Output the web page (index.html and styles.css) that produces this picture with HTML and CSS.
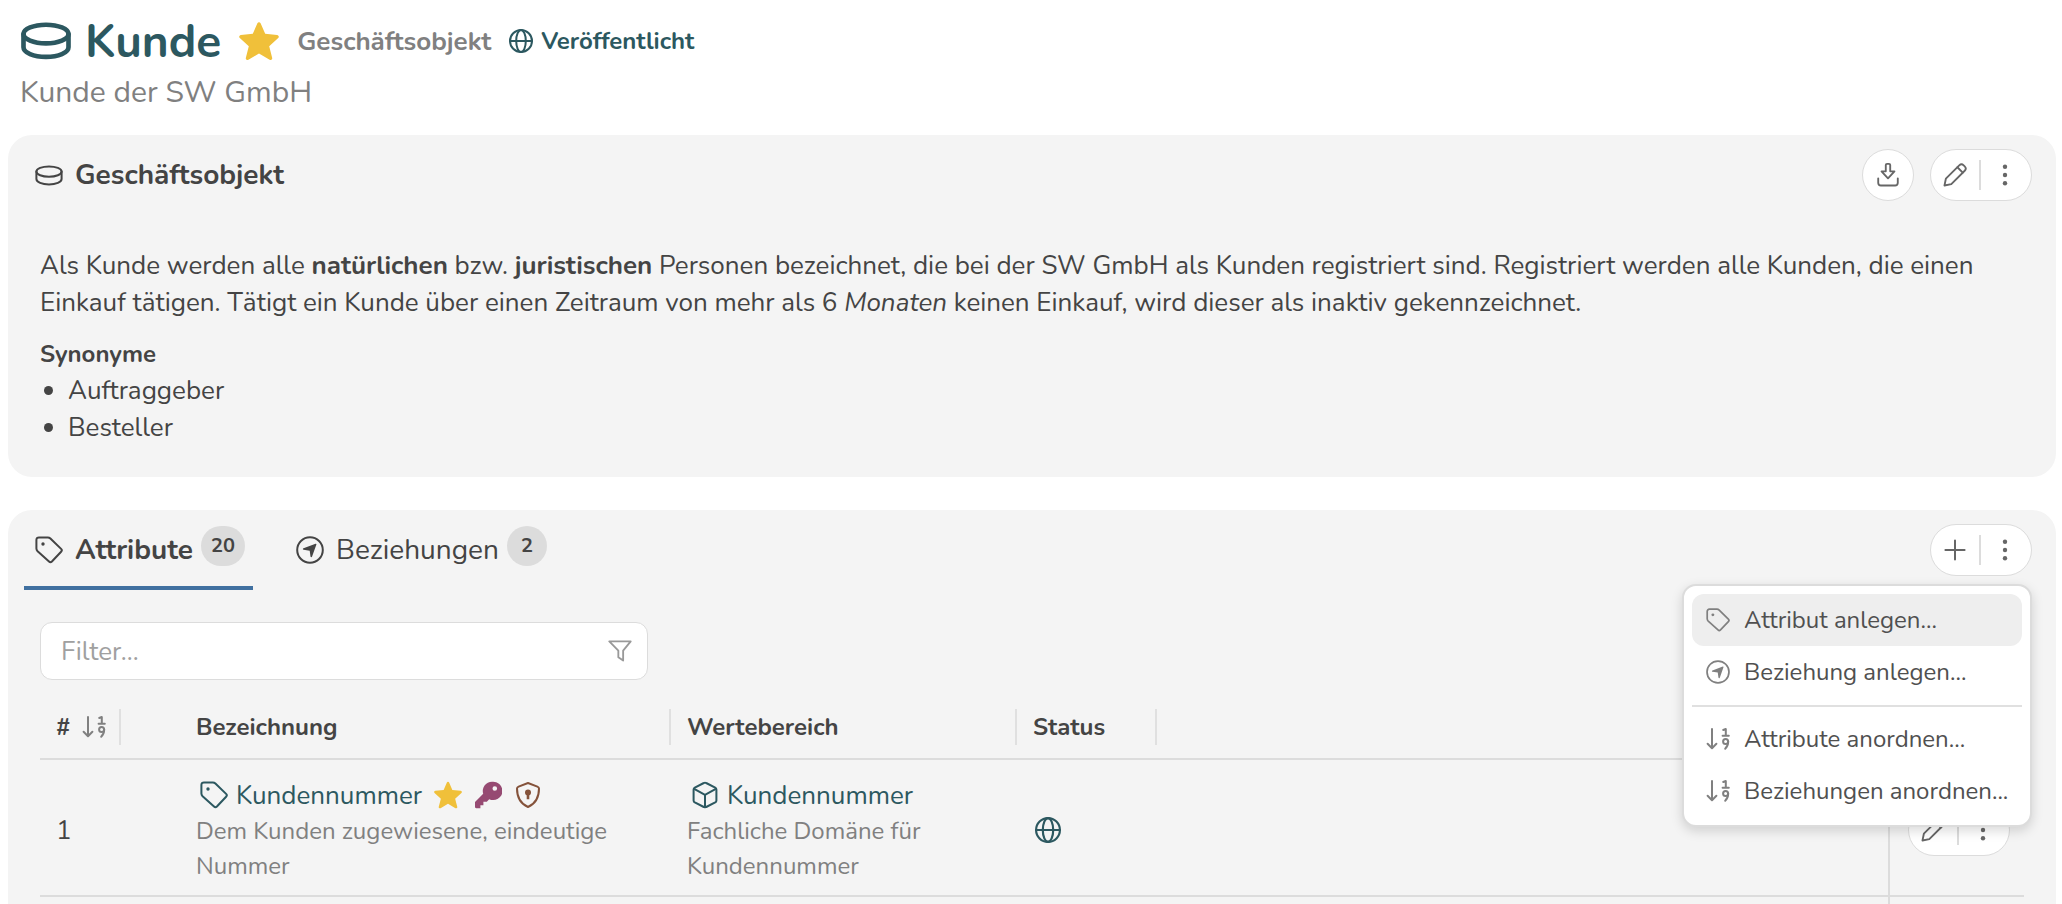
FILE: index.html
```html
<!DOCTYPE html>
<html lang="de">
<head>
    <meta charset="UTF-8">
    <meta name="viewport" content="width=device-width, initial-scale=1.0">
    <title>Kunde</title>
    <link rel="stylesheet" href="styles.css">
</head>
<body>
    <svg class="sprite" aria-hidden="true">
        <symbol id="i-object" viewBox="0 0 28 21">
            <ellipse cx="14" cy="6.6" rx="12.6" ry="5.2"/>
            <path d="M1.4 6.6v7.4c0 3 5.6 5.4 12.6 5.4s12.6-2.4 12.6-5.400V6.600"/>
        </symbol>
        <symbol id="i-star" viewBox="0 0 40 38">
            <path d="M18.4 1.2c.6-1.4 2.6-1.4 3.2 0l4.6 10.6 11.9 1.1c1.6.2 2.3 2.1 1.1 3.2l-9 8.1 3 11.7c.4 1.5-1.2 2.7-2.6 1.9L20 31.4l-10.6 6.4c-1.4.8-3-.4-2.6-1.9l3-11.7-9-8.1c-1.2-1.1-.5-3 1.1-3.2l11.9-1.1z"/>
        </symbol>
        <symbol id="i-globe" viewBox="0 0 24 24">
            <circle cx="12" cy="12" r="11"/>
            <ellipse cx="12" cy="12" rx="4.8" ry="11"/>
            <path d="M1 12h22"/>
        </symbol>
        <symbol id="i-tag" viewBox="0 0 28 28">
            <path d="M1.400 4C1.400 2.300 2.400 1.400 4 1.400h8.800c1 0 1.900.4 2.600 1.100l10.700 10.400c.9.9.9 2 0 2.900l-9.200 9.700c-.9.9-2 .9-2.900 0L2.600 15.300C1.800 14.500 1.400 13.600 1.400 12.600z"/>
            <circle class="dot" cx="8" cy="8" r="1.7"/>
        </symbol>
        <symbol id="i-compass" viewBox="0 0 28 28">
            <circle cx="14" cy="14" r="12.8"/>
            <path class="dot" d="M19.6 7.7c.6-.2 1 .2.8.8l-4.300 12.100c-.3.9-1.500.8-1.600-.1l-.8-5.800-6.100-.9c-.9-.1-1-1.300-.1-1.600z"/>
        </symbol>
        <symbol id="i-download" viewBox="0 0 24 26">
            <path d="M9.600 2.200C9.600 1.500 10.200 1 11 1h2c.8 0 1.400.5 1.400 1.200V9H19l-7 7.600L5 9h4.600z"/>
            <path d="M1.400 16.600v4.800c0 1.900 1.200 3 3 3h15.200c1.800 0 3-1.100 3-3v-4.800"/>
        </symbol>
        <symbol id="i-pencil" viewBox="0 0 26 26">
            <path d="M1.600 24.400 3.100 17 17.600 2.500c1.500-1.500 3.400-1.400 4.800 0l1.100 1.100c1.400 1.400 1.500 3.300 0 4.800L9 22.900z"/>
            <path d="m15.600 4.600 5.800 5.800"/>
        </symbol>
        <symbol id="i-dots" viewBox="0 0 24 24">
            <circle class="dot" cx="12" cy="3.8" r="2.2"/>
            <circle class="dot" cx="12" cy="12" r="2.2"/>
            <circle class="dot" cx="12" cy="20.2" r="2.2"/>
        </symbol>
        <symbol id="i-plus" viewBox="0 0 24 24">
            <path d="M12 2.400v19.200M2.400 12h19.200"/>
        </symbol>
        <symbol id="i-filter" viewBox="0 0 26 24">
            <path d="M1.400 1.600h23.200l-8.200 10v10.800l-5.200-3.600v-7.200z"/>
        </symbol>
        <symbol id="i-order" viewBox="0 0 24 22">
            <path d="M6 1v19M1.600 15.800 6 20.200l4.400-4.400"/>
            <path d="M17.200 2 19.800 1v6.400M16.600 7.800h6.200"/>
            <circle cx="19.600" cy="13.600" r="2.500"/>
            <path d="M22.200 13.600c0 3-1 5.200-3 7.200"/>
        </symbol>
        <symbol id="i-key" viewBox="0 0 28 28">
            <path class="dot" fill-rule="evenodd" d="M18 .8a9.200 9.200 0 0 0-8.800 12L1 21v5c0 .8.5 1.200 1.200 1.200h4.200v-3h3v-3.400h3.400l2.400-2.600A9.200 9.200 0 1 0 18 .8zm2.800 4.400a2.300 2.300 0 1 1 0 4.600 2.300 2.300 0 0 1 0-4.600z"/>
        </symbol>
        <symbol id="i-shield" viewBox="0 0 26 28">
            <path d="m13 2 9.400 3.600c1 .4 1.600 1 1.600 2C24 15.800 21 22.600 13 26 5 22.600 2 15.800 2 7.600c0-1 .6-1.600 1.600-2z"/>
            <circle class="dot" cx="13" cy="11.400" r="3"/>
            <path class="dot" d="M11.700 12h2.600v6.200h-2.600z"/>
        </symbol>
        <symbol id="i-cube" viewBox="0 0 26 28">
            <path d="M11.800 2q1.200-.7 2.400 0l9 4.600q1.200.7 1.200 2v10.800q0 1.300-1.200 2l-9 4.600q-1.200.7-2.400 0l-9-4.600q-1.200-.7-1.200-2V8.600q0-1.300 1.200-2z"/>
            <path d="M2.200 7.800 13 13.800l10.800-6M13 13.800v12.400"/>
        </symbol>
    </svg>

    <header class="page-header">
        <div class="title-row">
            <h1><svg class="icon icon-title"><use href="#i-object"/></svg>Kunde</h1>
            <svg class="icon star icon-star-big"><use href="#i-star"/></svg>
            <span class="kind">Geschäftsobjekt</span>
            <span class="state"><svg class="icon"><use href="#i-globe"/></svg>Veröffentlicht</span>
        </div>
        <p class="subtitle">Kunde der SW GmbH</p>
    </header>

    <main>
        <section class="card">
            <div class="card-header">
                <h2><svg class="icon icon-object"><use href="#i-object"/></svg>Geschäftsobjekt</h2>
                <div class="actions">
                    <div class="pill pill-round">
                        <button type="button" aria-label="Herunterladen"><svg class="icon"><use href="#i-download"/></svg></button>
                    </div>
                    <div class="pill">
                        <button type="button" aria-label="Bearbeiten"><svg class="icon"><use href="#i-pencil"/></svg></button>
                        <button type="button" aria-label="Mehr"><svg class="icon"><use href="#i-dots"/></svg></button>
                    </div>
                </div>
            </div>
            <div class="description">
                <p>Als Kunde werden alle <strong>natürlichen</strong> bzw. <strong>juristischen</strong> Personen bezeichnet, die bei der SW GmbH als Kunden registriert sind. Registriert werden alle Kunden, die einen Einkauf tätigen. Tätigt ein Kunde über einen Zeitraum von mehr als 6 <em>Monaten</em> keinen Einkauf, wird dieser als inaktiv gekennzeichnet.</p>
                <h3>Synonyme</h3>
                <ul>
                    <li>Auftraggeber</li>
                    <li>Besteller</li>
                </ul>
            </div>
        </section>

        <section class="card card-list">
            <div class="card-header">
                <nav class="tabs">
                    <a class="tab active" href="#attribute"><svg class="icon icon-m"><use href="#i-tag"/></svg>Attribute<span class="badge">20</span></a>
                    <a class="tab" href="#beziehungen"><svg class="icon icon-m"><use href="#i-compass"/></svg>Beziehungen<span class="badge">2</span></a>
                </nav>
                <div class="actions">
                    <div class="pill">
                        <button type="button" aria-label="Anlegen"><svg class="icon"><use href="#i-plus"/></svg></button>
                        <button type="button" aria-label="Mehr"><svg class="icon"><use href="#i-dots"/></svg></button>
                    </div>
                    <div class="menu">
                        <button type="button" class="selected"><svg class="icon"><use href="#i-tag"/></svg>Attribut anlegen...</button>
                        <button type="button"><svg class="icon"><use href="#i-compass"/></svg>Beziehung anlegen...</button>
                        <hr>
                        <button type="button"><svg class="icon"><use href="#i-order"/></svg>Attribute anordnen...</button>
                        <button type="button"><svg class="icon"><use href="#i-order"/></svg>Beziehungen anordnen...</button>
                    </div>
                </div>
            </div>
            <div class="list" id="attribute">
                <label class="filter">
                    <input type="text" placeholder="Filter..." aria-label="Filter">
                    <svg class="icon"><use href="#i-filter"/></svg>
                </label>
                <table>
                    <colgroup>
                        <col class="col-nr">
                        <col class="col-gap">
                        <col class="col-name">
                        <col class="col-range">
                        <col class="col-status">
                        <col>
                        <col class="col-actions">
                    </colgroup>
                    <thead>
                        <tr>
                            <th><div class="head sep"># <svg class="icon"><use href="#i-order"/></svg></div></th>
                            <th></th>
                            <th><div class="head sep">Bezeichnung</div></th>
                            <th><div class="head sep">Wertebereich</div></th>
                            <th><div class="head sep">Status</div></th>
                            <th></th>
                            <th></th>
                        </tr>
                    </thead>
                    <tbody>
                        <tr>
                            <td>1</td>
                            <td></td>
                            <td>
                                <div class="entry">
                                    <a href="#kundennummer"><svg class="icon icon-m"><use href="#i-tag"/></svg>Kundennummer</a>
                                    <svg class="icon icon-m star"><use href="#i-star"/></svg>
                                    <svg class="icon icon-m key"><use href="#i-key"/></svg>
                                    <svg class="icon icon-m shield"><use href="#i-shield"/></svg>
                                </div>
                                <div class="note">Dem Kunden zugewiesene, eindeutige Nummer</div>
                            </td>
                            <td>
                                <div class="entry">
                                    <a href="#domaene"><svg class="icon icon-m"><use href="#i-cube"/></svg>Kundennummer</a>
                                </div>
                                <div class="note">Fachliche Domäne für Kundennummer</div>
                            </td>
                            <td><svg class="icon published"><use href="#i-globe"/></svg></td>
                            <td></td>
                            <td class="row-actions">
                                <div class="pill">
                                    <button type="button" aria-label="Bearbeiten"><svg class="icon"><use href="#i-pencil"/></svg></button>
                                    <button type="button" aria-label="Mehr"><svg class="icon"><use href="#i-dots"/></svg></button>
                                </div>
                            </td>
                        </tr>
                        <tr>
                            <td></td>
                            <td></td>
                            <td></td>
                            <td></td>
                            <td></td>
                            <td></td>
                            <td class="row-actions"></td>
                        </tr>
                    </tbody>
                </table>
            </div>
        </section>
    </main>
</body>
</html>
```

FILE: styles.css
```css
* {
    box-sizing: border-box;
}
body {
    display: flex;
    flex-direction: column;
    height: 100vh;
    margin: 0;
    overflow: hidden;
    font-family: Nunito, Lato, sans-serif;
    font-size: 26px;
    line-height: 37px;
    color: #444;
    background-color: #fff;
}
h1, h2, h3, p, ul {
    margin: 0;
}
a {
    color: inherit;
    text-decoration: none;
}
button, input {
    font: inherit;
    color: inherit;
}

/* icons */
.sprite {
    display: none;
}
.icon {
    flex: none;
    width: 24px;
    height: 24px;
    fill: none;
    stroke: currentColor;
    stroke-width: 2;
    stroke-linecap: round;
    stroke-linejoin: round;
}
.icon-m {
    width: 28px;
    height: 28px;
}
.icon-object {
    width: 28px;
    height: 21px;
}
.icon-title {
    width: 50px;
    height: 38px;
    stroke-width: 2.6;
}
.icon-star-big {
    width: 40px;
    height: 38px;
}
.dot {
    fill: currentColor;
    stroke: none;
}
.star {
    fill: #f0c03a;
    stroke: none;
}
.key {
    color: #964a72;
}
.shield {
    color: #84523a;
}
.published {
    width: 26px;
    height: 26px;
    margin-left: 2px;
    color: #2c5860;
}

/* header */
.page-header {
    padding: 16px 20px 22px;
}
.title-row {
    display: flex;
    align-items: center;
    gap: 18px;
    height: 50px;
}
h1 {
    display: flex;
    align-items: center;
    gap: 14px;
    padding-left: 1px;
    font-size: 46px;
    color: #2c5860;
}
.kind {
    font-weight: bold;
    color: #808080;
}
.state {
    display: flex;
    align-items: center;
    gap: 8px;
    font-size: 24px;
    font-weight: bold;
    color: #2c5860;
}
.subtitle {
    padding-top: 6px;
    font-size: 30px;
    line-height: 41px;
    color: #808080;
}

/* cards */
main {
    display: flex;
    flex: 1;
    flex-direction: column;
    gap: 33px;
    min-height: 0;
    padding: 0 6px 0 8px;
}
.card {
    border-radius: 24px;
    background-color: #f4f4f4;
}
.card-list {
    flex: 1;
    min-height: 0;
    border-radius: 24px 24px 0 0;
}
.card-header {
    display: flex;
    justify-content: space-between;
    height: 80px;
    padding: 14px 24px 0 16px;
}
h2 {
    display: flex;
    align-items: center;
    gap: 12px;
    height: 52px;
    padding-left: 11px;
    font-size: 28px;
}
.actions {
    position: relative;
    display: flex;
    gap: 16px;
    height: 52px;
}
.pill {
    display: flex;
    align-items: center;
    width: 102px;
    height: 52px;
    border: 1px solid #dcdcdc;
    border-radius: 26px;
    background-color: #fff;
    color: #666;
}
.pill-round {
    width: 52px;
    justify-content: center;
}
.pill button {
    display: flex;
    flex: none;
    align-items: center;
    justify-content: center;
    width: 48px;
    height: 30px;
    padding: 0;
    border: 0;
    background: none;
}
.pill button + button {
    width: 50px;
    border-left: 2px solid #dcdcdc;
}

/* description */
.description {
    padding: 32px 32px 31px;
}
.description h3 {
    padding-top: 15px;
    font-size: 24px;
    line-height: 36px;
}
.description ul {
    padding-left: 28px;
}

/* tabs */
.tabs {
    display: flex;
    gap: 32px;
    height: 66px;
}
.tab {
    display: flex;
    align-items: flex-start;
    padding: 8px 8px 0 11px;
    font-size: 28px;
}
.tab .icon {
    margin: 4px 12px 0 0;
}
.tab.active {
    border-bottom: 4px solid #4070a0;
    font-weight: bold;
}
.badge {
    min-width: 40px;
    margin: -6px 0 0 8px;
    padding: 0 10px;
    border-radius: 20px;
    background-color: #dcdcdc;
    font-size: 20px;
    font-weight: bold;
    line-height: 40px;
    text-align: center;
}

/* menu */
.menu {
    position: absolute;
    top: 60px;
    right: 0;
    z-index: 1;
    width: 350px;
    padding: 8px;
    border: 2px solid #dcdcdc;
    border-radius: 14px;
    background-color: #fff;
    box-shadow: 0 4px 12px rgba(0, 0, 0, 0.15);
}
.menu button {
    display: flex;
    align-items: center;
    gap: 14px;
    width: 100%;
    height: 52px;
    padding: 0 14px;
    border: 0;
    border-radius: 12px;
    background: none;
    font-size: 24px;
    color: #505050;
    white-space: nowrap;
}
.menu button.selected {
    background-color: #eee;
}
.menu .icon {
    color: #808080;
}
.menu hr {
    margin: 7px 0 6px;
    border: 0;
    border-top: 2px solid #e0e0e0;
}

/* list */
.list {
    padding: 32px 32px 0;
}
.filter {
    display: flex;
    align-items: center;
    width: 608px;
    height: 58px;
    padding: 0 15px 0 20px;
    border: 1px solid #dcdcdc;
    border-radius: 12px;
    background-color: #fff;
    color: #999;
}
.filter input {
    flex: 1;
    min-width: 0;
    padding: 0;
    border: 0;
    outline: 0;
    background: none;
    color: #444;
}
.filter input::placeholder {
    color: #a0a0a0;
}
table {
    width: 100%;
    margin-top: 16px;
    border-collapse: collapse;
    table-layout: fixed;
}
.col-nr {
    width: 81px;
}
.col-gap {
    width: 59px;
}
.col-name {
    width: 491px;
}
.col-range {
    width: 346px;
}
.col-status {
    width: 140px;
}
.col-actions {
    width: 135px;
}
tr {
    border-bottom: 2px solid #dcdcdc;
}
th {
    padding: 13px 0;
    font-size: 24px;
    text-align: left;
}
.head {
    display: flex;
    align-items: center;
    gap: 12px;
    height: 36px;
    padding-left: 16px;
}
.head .icon {
    color: #808080;
}
.sep {
    border-right: 2px solid #e0e0e0;
}
td {
    height: 136px;
    padding: 16px 16px 11px;
}
td > .icon {
    display: block;
}
.entry {
    display: flex;
    align-items: center;
    gap: 12px;
    height: 38px;
    padding-left: 4px;
    color: #2c5860;
}
.entry a {
    display: flex;
    align-items: center;
    gap: 8px;
}
.note {
    font-size: 24px;
    line-height: 35px;
    color: #808080;
}
.row-actions {
    padding-left: 18px;
    border-left: 2px solid #dcdcdc;
}
```
